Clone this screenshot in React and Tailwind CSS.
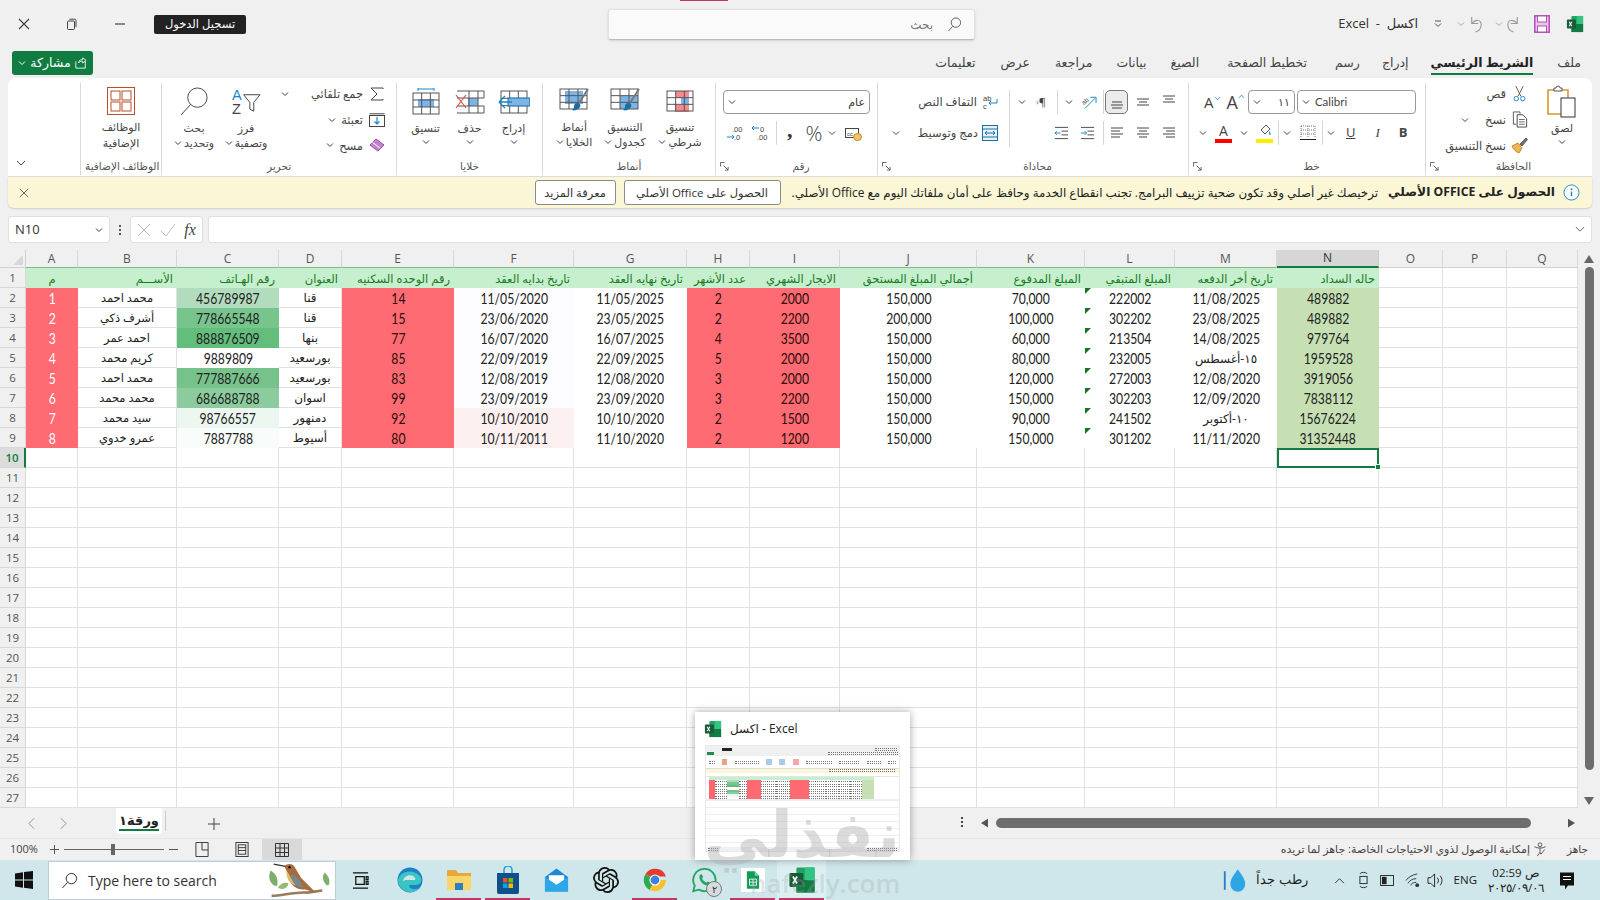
import React from 'react';
import { SiOpenai } from 'react-icons/si';

const Chev = ({ c = '#444', cls = '' }) => (
  <svg viewBox="0 0 8 8" className={`w-[8px] h-[8px] shrink-0 ${cls}`}><path d="M1 2.5 4 5.5 7 2.5" fill="none" stroke={c} strokeWidth="1" /></svg>
);

const GridLines = ({ x, y, w, h, cx = 3, cy = 3, s = '#555' }) => {
  const out = [];
  for (let i = 1; i < cx; i++) out.push(<line key={'v' + i} x1={x + (w * i) / cx} y1={y} x2={x + (w * i) / cx} y2={y + h} stroke={s} />);
  for (let i = 1; i < cy; i++) out.push(<line key={'h' + i} x1={x} y1={y + (h * i) / cy} x2={x + w} y2={y + (h * i) / cy} stroke={s} />);
  return <g>{out}<rect x={x} y={y} width={w} height={h} fill="none" stroke={s} /></g>;
};

const Launcher = () => (
  <svg viewBox="0 0 10 10" className="w-[9px] h-[9px] shrink-0"><path d="M.5 5V.5H5M4 4l5 5M9 5.5V9H5.5" fill="none" stroke="#555" /></svg>
);

const Sep = ({ h = 'h-[24px]' }) => <div className={`w-px ${h} bg-[#d5d5d5] shrink-0`} />;

const Group = ({ w, label, launcher, children, last }) => (
  <div className={`${w} h-full flex flex-col shrink-0 ${last ? '' : 'border-r border-[#d9d9d9]'}`}>
    <div className="flex-1 min-h-0 flex">{children}</div>
    <div className="h-[17px] flex items-center px-1 text-[10.5px] leading-none text-[#555]">
      {launcher ? <Launcher /> : null}
      <span dir="rtl" className="flex-1 text-center whitespace-nowrap">{label}</span>
    </div>
  </div>
);

const Big = ({ w = 'w-[44px]', icon, l1, l2, chevInline, chevBelow }) => (
  <div className={`${w} flex flex-col items-center shrink-0`}>
    <div className="h-[31px] flex items-center justify-center">{icon}</div>
    <div dir="rtl" className="mt-[3px] text-[11px] leading-[15px] text-[#444] whitespace-nowrap">{l1}</div>
    {l2 ? (
      <div className="flex items-center gap-[2px] text-[11px] leading-[15px] text-[#444] whitespace-nowrap">
        {chevInline ? <Chev /> : null}<span dir="rtl">{l2}</span>
      </div>
    ) : null}
    {chevBelow ? <Chev cls="mt-[3px]" /> : null}
  </div>
);

const Small = ({ icon, label, chev }) => (
  <div className="h-[26.5px] flex items-center justify-end gap-[5px] text-[11.5px] text-[#444]">
    {chev ? <Chev /> : null}
    <span dir="rtl" className="whitespace-nowrap">{label}</span>
    <span className="w-[17px] flex justify-center shrink-0">{icon}</span>
  </div>
);

/* ---------- ribbon icons ---------- */
const IcPaste = () => (
  <svg viewBox="0 0 32 34" className="w-[32px] h-[34px]">
    <path d="M2 5h20v24H2z" fill="#fff" stroke="#d39a2e" strokeWidth="1.6" />
    <path d="M8 6V3h2a2 2 0 0 1 4 0h2v3z" fill="#fff" stroke="#555" />
    <rect x="15" y="13" width="14" height="19" fill="#fff" stroke="#333" />
  </svg>
);
const IcCut = () => (
  <svg viewBox="0 0 14 18" className="w-[13px] h-[17px]">
    <path d="M3 1l5.5 11M11 1L5.5 12" stroke="#555" fill="none" />
    <circle cx="3.5" cy="14.5" r="2.4" fill="none" stroke="#1a86c8" /><circle cx="10.5" cy="14.5" r="2.4" fill="none" stroke="#1a86c8" />
  </svg>
);
const IcCopy = () => (
  <svg viewBox="0 0 16 18" className="w-[16px] h-[17px]">
    <path d="M4 14H1V1h7v2" fill="none" stroke="#555" /><path d="M5 4h6l4 4v9H5z" fill="#fff" stroke="#444" /><path d="M7 9h6M7 11.5h6M7 14h6" stroke="#666" />
  </svg>
);
const IcBrush = () => (
  <svg viewBox="0 0 17 16" className="w-[17px] h-[16px]">
    <path d="M1 9l6-3 4 5-3 5C5 15 2 12 1 9z" fill="#f0b45a" stroke="#c98a25" />
    <path d="M9 7l6-6 1.5 1.5L11 9z" fill="#777" stroke="#555" />
  </svg>
);
const IcSum = () => <svg viewBox="0 0 14 14" className="w-[14px] h-[14px]"><path d="M13 2V1H1l6 6-6 6h12v-1" fill="none" stroke="#444" /></svg>;
const IcFill = () => (
  <svg viewBox="0 0 16 14" className="w-[16px] h-[14px]"><rect x=".5" y="2.5" width="15" height="11" fill="#fff" stroke="#444" /><path d="M.5.8h15" stroke="#444" /><path d="M8 4v7M5.5 8.5 8 11l2.5-2.5" fill="none" stroke="#1a86c8" strokeWidth="1.2" /></svg>
);
const IcClear = () => (
  <svg viewBox="0 0 16 14" className="w-[16px] h-[14px]"><path d="M1 7l6-6 8 6-6 6z" fill="#c583d0" stroke="#9c4aa8" /><path d="M3.5 4.5 11 10" stroke="#fff" /></svg>
);
const IcSort = () => (
  <svg viewBox="0 0 30 32" className="w-[29px] h-[31px]">
    <text x="0" y="14" fontSize="15" fill="#1a86c8" fontFamily="Liberation Sans">A</text>
    <text x="0" y="29" fontSize="15" fill="#444" fontFamily="Liberation Sans">Z</text>
    <path d="M12 9h17l-6.5 8v9l-4-2v-7z" fill="#fff" stroke="#444" />
  </svg>
);
const IcFind = () => (
  <svg viewBox="0 0 30 30" className="w-[29px] h-[29px]"><circle cx="18" cy="11" r="10" fill="none" stroke="#444" /><path d="M11 18 1 29" stroke="#444" /></svg>
);
const IcAddins = () => (
  <svg viewBox="0 0 28 28" className="w-[28px] h-[28px]">
    <rect x=".5" y=".5" width="27" height="27" fill="#fff" stroke="#b8502a" />
    <rect x="4" y="4" width="9" height="9" fill="none" stroke="#b8502a" /><rect x="15" y="4" width="9" height="9" fill="none" stroke="#b8502a" />
    <rect x="4" y="15" width="9" height="9" fill="none" stroke="#b8502a" /><rect x="15" y="15" width="9" height="9" fill="none" stroke="#b8502a" />
  </svg>
);
const IcFormat = () => (
  <svg viewBox="0 0 30 28" className="w-[30px] h-[28px]">
    <path d="M7 1h16M7 0v3M23 0v3" stroke="#1a86c8" />
    <rect x="7" y="11" width="16" height="8" fill="#7db4e8" /><GridLines x={2} y={5} w={26} h={21} />
  </svg>
);
const IcDelete = () => (
  <svg viewBox="0 0 30 24" className="w-[30px] h-[24px]">
    <rect x="13" y="8" width="10" height="8" fill="#7db4e8" />
    <path d="M2 1h27M2 23h27M29 1v7M29 16v7M23 1v22M14 1v22M2 8h27M2 16h27" stroke="#555" fill="none" />
    <path d="M1 5l10 13M11 5 1 18" stroke="#e2504a" strokeWidth="1.2" />
  </svg>
);
const IcInsert = () => (
  <svg viewBox="0 0 32 24" className="w-[32px] h-[24px]">
    <GridLines x={3} y={1} w={26} h={22} />
    <rect x="10" y="8" width="22" height="8" fill="#7db4e8" stroke="#1a6ea8" />
    <path d="M1 12 7 6M1 12l6 6M1 12h13" stroke="#1a86c8" fill="none" strokeWidth="1.4" />
  </svg>
);
const Brush = () => (
  <g><path d="M29 1 20 15" stroke="#777" strokeWidth="2" /><path d="M18 15c3 0 4 2 3 4-2 3-6 4-8 3 2-1 2-3 2-4s1-3 3-3z" fill="#1a6ea8" /></g>
);
const IcCellStyle = () => (
  <svg viewBox="0 0 31 26" className="w-[31px] h-[26px]"><rect x="6" y="3" width="18" height="13" fill="#7db4e8" /><GridLines x={1} y={1} w={27} h={20} /><Brush /></svg>
);
const IcTable = () => (
  <svg viewBox="0 0 31 26" className="w-[31px] h-[26px]"><rect x="10" y="8" width="18" height="13" fill="#7db4e8" /><GridLines x={1} y={1} w={27} h={20} /><Brush /></svg>
);
const IcCond = () => (
  <svg viewBox="0 0 28 22" className="w-[28px] h-[22px]">
    <rect x="10" y="1" width="13" height="7" fill="#f88a8f" /><rect x="15" y="8" width="8" height="7" fill="#7db4e8" /><rect x="9" y="15" width="14" height="7" fill="#f88a8f" />
    <GridLines x={1} y={1} w={26} h={20} />
  </svg>
);
const IcWrap = () => (
  <svg viewBox="0 0 16 16" className="w-[16px] h-[16px]"><text x="1" y="7" fontSize="7.5" fill="#444" fontFamily="Liberation Sans">ab</text><text x="1" y="14.5" fontSize="7.5" fill="#444" fontFamily="Liberation Sans">c</text><path d="M15 5v4H7M9 7 7 9l2 2" fill="none" stroke="#1a86c8" /></svg>
);
const IcMerge = () => (
  <svg viewBox="0 0 16 16" className="w-[16px] h-[16px]"><rect x=".5" y=".5" width="15" height="15" fill="#e8f2fb" stroke="#1a6ea8" /><path d="M.5 4h15M.5 12h15" stroke="#1a6ea8" /><path d="M3 8h10M5 6 3 8l2 2M11 6l2 2-2 2" fill="none" stroke="#1a6ea8" /></svg>
);
const Lines = ({ rows }) => (
  <svg viewBox="0 0 14 14" className="w-[14px] h-[14px]">
    {rows.map((r, i) => <line key={i} x1={r[0]} x2={r[1]} y1={r[2]} y2={r[2]} stroke="#444" />)}
  </svg>
);
const IcOrient = () => (
  <svg viewBox="0 0 18 16" className="w-[17px] h-[16px] overflow-visible"><text x="2" y="10" fontSize="7" fill="#555" fontFamily="Liberation Sans" transform="rotate(-40 5 8)">ab</text><path d="M5 15 16 4M11 3h6v6" fill="none" stroke="#1a86c8" /></svg>
);
const IcIndent = ({ rev }) => (
  <svg viewBox="0 0 16 14" className="w-[15px] h-[14px]">
    <path d="M1 1h14M8 5h7M8 9h7M1 13h14" stroke="#444" />
    <path d={rev ? 'M1 7h6M5 5l2 2-2 2' : 'M7 7H1M3 5 1 7l2 2'} fill="none" stroke="#1a86c8" />
  </svg>
);
const IcCur = () => (
  <svg viewBox="0 0 17 15" className="w-[17px] h-[15px]"><rect x=".5" y="2.5" width="13" height="9" fill="#fff" stroke="#444" /><text x="2" y="9.5" fontSize="6" fill="#444" fontFamily="Liberation Sans">cc</text><ellipse cx="12.5" cy="11" rx="4" ry="3.5" fill="#f6c26b" stroke="#c98a25" /></svg>
);
const IcDec = ({ rev }) => (
  <svg viewBox="0 0 18 18" className="w-[18px] h-[18px]">
    <text x={rev ? 9 : 6} y="7.5" fontSize="7.5" fill="#444" fontFamily="Liberation Sans">{rev ? '0' : '.00'}</text>
    <text x={rev ? 6 : 8} y="16" fontSize="7.5" fill="#444" fontFamily="Liberation Sans">{rev ? '.00' : '.0'}</text>
    {rev ? <path d="M8 4H1M3 2 1 4l2 2" fill="none" stroke="#1a86c8" /> : <path d="M1 13h7M6 11l2 2-2 2" fill="none" stroke="#1a86c8" />}
  </svg>
);
const IcBorders = () => (
  <svg viewBox="0 0 16 16" className="w-[16px] h-[16px]"><path d="M1 1h14M1 5h14M1 9h14M1 1v12M8 1v12M15 1v12" stroke="#777" strokeDasharray="1 1" fill="none" /><path d="M0 14.5h16" stroke="#222" /></svg>
);

/* ---------- sheet data ---------- */
const COLS = ['A', 'B', 'C', 'D', 'E', 'F', 'G', 'H', 'I', 'J', 'K', 'L', 'M', 'N', 'O', 'P', 'Q'];
const HEAD = ['م', 'الأســـم', 'رقم الهـاتف', 'العنوان', 'رقم الوحده السكنيه', 'تاريخ بدايه العقد', 'تاريخ نهايه العقد', 'عدد الأشهر', 'الايجار الشهري', 'أجمالي المبلغ المستحق', 'المبلغ المدفوع', 'المبلغ المتبقي', 'تاريخ أخر الدفعه', 'حاله السداد'];
const ROWS = [
  ['1', 'محمد احمد', '456789987', 'قنا', '14', '11/05/2020', '11/05/2025', '2', '2000', '150,000', '70,000', '222002', '11/08/2025', '489882'],
  ['2', 'أشرف ذكي', '778665548', 'قنا', '15', '23/06/2020', '23/05/2025', '2', '2200', '200,000', '100,000', '302202', '23/08/2025', '489882'],
  ['3', 'احمد عمر', '888876509', 'بنها', '77', '16/07/2020', '16/07/2025', '4', '3500', '150,000', '60,000', '213504', '14/08/2025', '979764'],
  ['4', 'كريم محمد', '9889809', 'بورسعيد', '85', '22/09/2019', '22/09/2025', '5', '2000', '150,000', '80,000', '232005', '١٥-أغسطس', '1959528'],
  ['5', 'محمد احمد', '777887666', 'بورسعيد', '83', '12/08/2019', '12/08/2020', '3', '2000', '150,000', '120,000', '272003', '12/08/2020', '3919056'],
  ['6', 'محمد محمد', '686688788', 'اسوان', '99', '23/09/2019', '23/09/2020', '3', '2200', '150,000', '150,000', '302203', '12/09/2020', '7838112'],
  ['7', 'سيد محمد', '98766557', 'دمنهور', '92', '10/10/2010', '10/10/2020', '2', '1500', '150,000', '90,000', '241502', '١٠-أكتوبر', '15676224'],
  ['8', 'عمرو خدوي', '7887788', 'أسيوط', '80', '10/11/2011', '11/10/2020', '2', '1200', '150,000', '150,000', '301202', '11/11/2020', '31352448'],
];
const HEAT = ['bg-[#b2dcbe]', 'bg-[#78c48d]', 'bg-[#63be7b]', 'bg-white', 'bg-[#77c28b]', 'bg-[#8bcb9d]', 'bg-[#ecf7f0]', 'bg-[#f8fcfa]'];
const GRID = 'border-r border-b border-[#e1e1e1]';
const RED_C = 'bg-[#ff6b72] text-[#2a0c0c]';

function cellClass(c, r) {
  if (c === 0) return 'bg-[#ff6b72] text-white';
  if (c === 2) return `${HEAT[r]} text-[#222]`;
  if (c === 1 || c === 3) return `bg-white text-[#222] ${GRID}`;
  if (c === 4 || c === 7 || c === 8) return RED_C;
  if (c === 5) return r >= 6 ? 'bg-[#fdf0f0] text-[#222]' : 'bg-[#fdfcfe] text-[#222]';
  if (c === 13) return 'bg-[#c6e0b4] text-[#222]';
  return 'bg-white text-[#222]';
}

const Sheet = () => {
  const cells = [];
  cells.push(
    <div key="corner" className="bg-[#f0f0f0] border-b border-r border-[#d0d0d0] flex items-end justify-end p-[2px]">
      <div className="w-0 h-0 border-l-[10px] border-l-transparent border-b-[10px] border-b-[#d8d8d8]" />
    </div>
  );
  COLS.forEach((c, ci) => {
    const cls = c === 'N'
      ? 'bg-[#d6d6d6] border-b-2 border-b-[#107c41] border-r-[#c8c8c8] text-[#333]'
      : ci < 14
        ? 'bg-[#f0f0f0] border-b border-b-[#7fb892] border-r-[#d8d8d8] text-[#555]'
        : 'bg-[#f0f0f0] border-b border-b-[#d0d0d0] border-r-[#d8d8d8] text-[#555]';
    cells.push(<div key={c} className={`flex items-center justify-center text-[12px] border-r ${cls}`}>{c}</div>);
  });
  for (let r = 1; r <= 27; r++) {
    const active = r === 10;
    cells.push(
      <div key={'rh' + r} className={`flex items-center justify-center text-[11.5px] border-b border-[#d8d8d8] ${active ? 'bg-[#dcdcdc] text-[#107c41] border-r-2 border-r-[#107c41] font-semibold' : 'bg-[#f0f0f0] text-[#555] border-r'}`}>{r}</div>
    );
    COLS.forEach((c, ci) => {
      const key = c + r;
      if (r === 1 && ci < 14) {
        cells.push(
          <div key={key} dir="rtl" className={`bg-[#c6efce] text-[#1a7a24] text-[11.5px] pt-px flex items-center overflow-visible whitespace-nowrap px-[4px] ${ci === 0 ? 'justify-center' : 'justify-start'}`}>{HEAD[ci]}</div>
        );
      } else if (r >= 2 && r <= 9 && ci < 14) {
        const val = ROWS[r - 2][ci];
        const isAr = ci === 1 || ci === 3 || (ci === 12 && /[^\d/]/.test(val));
        cells.push(
          <div key={key} dir={isAr ? 'rtl' : undefined} className={`relative flex items-center justify-center whitespace-nowrap pt-px ${cellClass(ci, r - 2)}`}>
            {ci === 11 ? <span className="absolute left-0 top-0 w-0 h-0 border-t-[6px] border-t-[#14761f] border-r-[6px] border-r-transparent" /> : null}
            {isAr
              ? <span className={ci === 1 ? 'text-[11.5px]' : 'text-[12px]'}>{val}</span>
              : <span className="inline-block scale-x-[0.84] text-[14.5px] font-['Lato',sans-serif]">{val}</span>}
          </div>
        );
      } else if (active && c === 'N') {
        cells.push(
          <div key={key} className="relative bg-white border-2 border-[#107c41]">
            <span className="absolute right-[-4px] bottom-[-4px] w-[6px] h-[6px] bg-[#107c41] border border-white" />
          </div>
        );
      } else {
        cells.push(<div key={key} className={`bg-white ${GRID}`} />);
      }
    });
  }
  return (
    <div className="grid grid-cols-[26px_52px_99px_102px_63px_112px_120px_113px_63px_90px_137px_108px_90px_102px_102px_64px_64px_71px] grid-rows-[18px] auto-rows-[20px] w-[1578px] h-[558px] overflow-hidden shrink-0">
      {cells}
    </div>
  );
};

const VScroll = () => (
  <div className="w-[22px] h-[558px] flex flex-col items-center shrink-0 bg-[#f0f0f0]">
    <svg viewBox="0 0 10 8" className="w-[10px] h-[8px] mt-[5px]"><path d="M5 0l5 8H0z" fill="#666" /></svg>
    <div className="w-[9px] h-[503px] mt-[4px] rounded-full bg-[#6e6e6e]" />
    <div className="flex-1" />
    <svg viewBox="0 0 10 8" className="w-[10px] h-[8px] mb-[3px]"><path d="M5 8 10 0H0z" fill="#666" /></svg>
  </div>
);

/* ---------- taskbar icons ---------- */
const ExcelIc = ({ s = 'w-[18px] h-[18px]' }) => (
  <svg viewBox="0 0 20 20" className={s}>
    <rect x="6" y="1" width="13" height="18" rx="1" fill="#21a366" /><rect x="12" y="1" width="7" height="9" fill="#33c481" /><rect x="6" y="10" width="13" height="9" fill="#107c41" />
    <rect x="1" y="5" width="10" height="10" rx="1" fill="#185c37" /><path d="M3.5 7.5l3 5M6.5 7.5l-3 5" stroke="#fff" strokeWidth="1.2" />
  </svg>
);
const Bird = () => (
  <svg viewBox="6 3 58 36" className="w-[66px] h-[38px]">
    <path d="M10 36c10 0 22-4 34-3l14-2" stroke="#9a7b5c" strokeWidth="2.5" fill="none" />
    <path d="M12 26c-5-4-5-9-3-14 5 3 8 8 6 15z" fill="#7cb06a" /><path d="M16 28c3-4 6-5 10-4-1 5-5 7-10 4z" fill="#90bd77" />
    <path d="M62 26c-4-4-4-8-2-12 4 3 6 8 4 12z" fill="#7cb06a" />
    <path d="M22 8c3-3 8-3 10 1l6 10 14 14-10-3c-9 1-16-6-16-14z" fill="#a86b3c" />
    <path d="M28 16c5 0 9 5 12 12-6 0-11-4-12-12z" fill="#6f8a92" />
    <path d="M24 12c4 5 5 10 9 14-6-1-9-6-9-14z" fill="#e6b76a" />
    <circle cx="27" cy="9" r="1.2" fill="#111" /><path d="M23 8 12 6" stroke="#333" strokeWidth="1.2" />
  </svg>
);
const Win = () => (
  <svg viewBox="0 0 18 18" className="w-[18px] h-[18px]"><path d="M0 2.5 8 1.2V8.5H0zM9 1l9-1v8.5H9zM0 9.5h8v7.3L0 15.5zM9 9.5h9V18l-9-1.2z" fill="#111" /></svg>
);
const Edge = () => (
  <svg viewBox="0 0 26 26" className="w-[26px] h-[26px]">
    <circle cx="13" cy="13" r="12.5" fill="#1c7fc8" /><path d="M1 13C3 3 17 2 23 9c3 4 1 9-4 9H12c0 4 6 6 12 2-3 4-8 6-13 5C4 23 1 18 1 13z" fill="#3ac4c4" />
    <path d="M6 15c0-5 5-8 10-6 2 1 3 3 2 4H9c-2 0-3 1-3 2z" fill="#cfe7ea" />
  </svg>
);
const Folder = () => (
  <svg viewBox="0 0 26 24" className="w-[26px] h-[24px]"><path d="M1 2h9l2 3h13v4H1z" fill="#e8a93a" /><path d="M1 8h24v13a1 1 0 0 1-1 1H2a1 1 0 0 1-1-1z" fill="#f9d56a" /><rect x="9" y="15" width="8" height="7" fill="#2d7fc1" /></svg>
);
const Store = () => (
  <svg viewBox="0 0 24 28" className="w-[24px] h-[28px]"><path d="M8 7V4a4 4 0 0 1 8 0v3" fill="none" stroke="#2aa3d8" strokeWidth="1.6" /><path d="M1 7h22v19a2 2 0 0 1-2 2H3a2 2 0 0 1-2-2z" fill="#0f4f8a" /><rect x="7" y="12" width="4.5" height="4.5" fill="#f25022" /><rect x="12.5" y="12" width="4.5" height="4.5" fill="#7fba00" /><rect x="7" y="17.5" width="4.5" height="4.5" fill="#00a4ef" /><rect x="12.5" y="17.5" width="4.5" height="4.5" fill="#ffb900" /></svg>
);
const Mail = () => (
  <svg viewBox="0 0 26 24" className="w-[25px] h-[24px]"><path d="M1 9 13 0l12 9v15H1z" fill="#1e88d8" /><path d="M5 7h16v7l-8 5-8-5z" fill="#fff" /><path d="M1 9l12 8 12-8v15H1z" fill="#2ea7ea" /></svg>
);
const Chrome = () => (
  <svg viewBox="0 0 26 26" className="w-[26px] h-[26px]">
    <path d="M13 13 3.5 7A11.5 11.5 0 0 1 24 9.5H13z" fill="#e33b2e" /><path d="M13 13 7.5 23A11.5 11.5 0 0 1 3.5 7z" fill="#2da94f" /><path d="M13 13h11a11.5 11.5 0 0 1-16.5 10z" fill="#fbc02d" />
    <circle cx="13" cy="13" r="5.6" fill="#fff" /><circle cx="13" cy="13" r="4.4" fill="#3b82e0" />
  </svg>
);
const Whats = () => (
  <svg viewBox="0 0 28 28" className="w-[26px] h-[26px]">
    <path d="M14 2a12 12 0 0 0-10 18L2.5 26l6-1.6A12 12 0 1 0 14 2z" fill="none" stroke="#25a560" strokeWidth="2" />
    <path d="M9.5 8.5c1-1 2-1 2.5 0l1 2c.2.6-1 1.6-1 2 .8 2 2.5 3.5 4.5 4.3.5 0 1.2-1.3 1.8-1.1l2 1c1 .5.7 2-.3 2.7-5 3-13-5-10.5-11z" fill="#25a560" />
  </svg>
);
const Sheets = () => (
  <div className="w-[24px] h-[24px] bg-white flex items-center justify-center">
    <svg viewBox="0 0 16 22" className="w-[14px] h-[20px]"><path d="M1 1h9l5 5v15H1z" fill="#0f9d58" /><path d="M10 1l5 5h-5z" fill="#87ceac" /><path d="M4 10h8v7H4zM4 13.5h8M8 10v7" fill="none" stroke="#fff" /></svg>
  </div>
);

const TaskIcon = ({ children, bar, active, w = 'w-[49px]' }) => (
  <div className={`${w} h-full flex items-center justify-center relative shrink-0 ${active ? 'bg-[#dcf0f2]' : ''}`}>
    {children}
    {bar ? <span className="absolute bottom-0 left-[2px] right-[2px] h-[2px] bg-[#c2376a]" /> : null}
  </div>
);

const Dash = ({ w }) => <i className={`block ${w} h-[3px] border-y border-dotted border-[#777]`} />;

const Mini = () => {
  const cols = 'grid grid-cols-[3px_6px_12px_12px_8px_14px_15px_14px_8px_11px_17px_13px_11px_12px_12px_8px_8px_9px]';
  const heat = ['bg-[#b2dcbe]', 'bg-[#78c48d]', 'bg-[#63be7b]', 'bg-white', 'bg-[#77c28b]', 'bg-[#8bcb9d]', 'bg-[#ecf7f0]', 'bg-white'];
  const dot = 'border-b border-dotted border-[#777]';
  const rows = [];
  for (let r = 0; r < 8; r++) {
    rows.push(
      <div key={r} className={`${cols} h-[2.4px]`}>
        <i /><i className="bg-[#ff666d]" /><i className={dot} /><i className={heat[r]} /><i className={dot} />
        <i className="bg-[#ff6a71]" /><i className={dot} /><i className={dot} /><i className="bg-[#ff6a71]" /><i className="bg-[#ff6a71]" />
        <i className={dot} /><i className={dot} /><i className={dot} /><i className={dot} /><i className="bg-[#c6e0b4]" />
      </div>
    );
  }
  return (
    <div className="w-[195px] h-[107px] bg-white border border-[#e8e8e8] flex flex-col">
      <div className="h-[6px] bg-[#f0f0f0] flex items-center px-[2px] gap-[6px]"><i className="block w-[10px] h-[3px] bg-[#222] ml-[14px]" /><i className="block flex-1 h-px" /><Dash w="w-[22px]" /></div>
      <div className="h-[4px] bg-[#f0f0f0] flex justify-between px-[1px]"><i className="block w-[7px] h-[3px] bg-[#1f8a4c]" /><Dash w="w-[70px]" /></div>
      <div className="h-[13px] bg-white border-b border-[#ddd] flex justify-between items-center px-[3px]">
        <Dash w="w-[6px]" /><i className="block w-[5px] h-[6px] bg-[#e9a184]" /><Dash w="w-[24px]" /><i className="block w-[6px] h-[6px] bg-[#a8cbe8]" /><i className="block w-[6px] h-[6px] bg-[#a8cbe8]" /><i className="block w-[6px] h-[6px] bg-[#f6a5a8]" /><Dash w="w-[26px]" /><Dash w="w-[20px]" /><Dash w="w-[14px]" /><Dash w="w-[8px]" />
      </div>
      <div className="h-[4px] bg-[#fbf7d8] flex justify-end pr-[4px]"><Dash w="w-[66px]" /></div>
      <div className="h-[4px] border-b border-[#e5e5e5]" />
      <div className={`${cols} h-[3px]`}><i /><i className="col-span-14 bg-[#c6efce]" /></div>
      <div className="flex flex-col">{rows}</div>
      <div className="flex-1 border-t border-[#eee] bg-[linear-gradient(#eee_1px,transparent_1px)] bg-[length:100%_7px]" />
      <div className="h-[4px] bg-[#f0f0f0] flex justify-between items-center px-[2px]"><Dash w="w-[10px]" /><Dash w="w-[30px]" /></div>
    </div>
  );
};

const TABS = [
  ['ملف', 'ml-[24px]'], ['الشريط الرئيسي', 'ml-[22px]'], ['إدراج', 'ml-[22px]'], ['رسم', 'ml-[28px]'], ['تخطيط الصفحة', 'ml-[28px]'],
  ['الصيغ', 'ml-[24px]'], ['بيانات', 'ml-[24px]'], ['مراجعة', 'ml-[25px]'], ['عرض', 'ml-[25px]'], ['تعليمات', 'ml-0'],
];

export default function App() {
  return (
    <div className="w-[1600px] h-[900px] relative overflow-hidden bg-[#f0f0f0] flex flex-col font-['Open_Sans','DejaVu_Sans',sans-serif] text-[#333]">
      {/* title bar */}
      <div className="h-[50px] flex items-start shrink-0 relative">
        <div className="w-[608px] h-[48px] flex items-center pl-[18px] shrink-0">
          <svg viewBox="0 0 12 12" className="w-[12px] h-[12px] shrink-0"><path d="M1 1l10 10M11 1 1 11" stroke="#444" strokeWidth="1.2" /></svg>
          <svg viewBox="0 0 12 12" className="w-[12px] h-[12px] ml-[36px] shrink-0"><rect x="1.5" y="3" width="7" height="8.5" rx="1" fill="none" stroke="#444" /><path d="M3.5 1.2H8.5a1.5 1.5 0 0 1 1.5 1.5V9" fill="none" stroke="#444" /></svg>
          <svg viewBox="0 0 12 12" className="w-[12px] h-[12px] ml-[36px] shrink-0"><path d="M1 6h10" stroke="#444" strokeWidth="1.2" /></svg>
          <div dir="rtl" className="ml-[28px] w-[92px] h-[19px] bg-[#222] rounded-[2px] text-white text-[11.5px] flex items-center justify-center whitespace-nowrap">تسجيل الدخول</div>
        </div>
        <div className="w-[367px] h-[31px] mt-[9px] bg-[#fafafa] rounded-[3px] border border-[#e2e2e2] border-b-[#bbb] shadow-sm flex items-center justify-end gap-[14px] pr-[12px] shrink-0">
          <span dir="rtl" className="text-[12px] text-[#777]">بحث</span>
          <svg viewBox="0 0 16 16" className="w-[15px] h-[15px]"><circle cx="9.5" cy="6" r="5" fill="none" stroke="#555" /><path d="M6 10 1.5 15" stroke="#555" /></svg>
        </div>
        <div className="flex-1 h-[48px] flex items-center justify-end pr-[16px]">
          <span dir="rtl" className="text-[13px] text-[#333] whitespace-pre">{'اكسل  -  Excel'}</span>
          <svg viewBox="0 0 10 10" className="w-[10px] h-[10px] ml-[15px]"><path d="M2 2h6M2 4.5l3 3 3-3" fill="none" stroke="#555" /></svg>
          <Chev c="#aaa" cls="ml-[14px]" />
          <svg viewBox="0 0 14 18" className="w-[15px] h-[17px] ml-[3px]"><path d="M3 1v7h7M3 8c4-5 10-4 10 1 0 4-3 7-6 8" fill="none" stroke="#999" strokeWidth="1.2" /></svg>
          <Chev c="#aaa" cls="ml-[12px]" />
          <svg viewBox="0 0 14 18" className="w-[15px] h-[17px] ml-[3px]"><path d="M11 1v7H4M11 8C7 3 1 4 1 9c0 4 3 7 6 8" fill="none" stroke="#999" strokeWidth="1.2" /></svg>
          <svg viewBox="0 0 16 18" className="w-[16px] h-[18px] ml-[13px]"><rect x=".8" y=".8" width="14.4" height="16.4" fill="#e9c6ea" stroke="#b04fb5" strokeWidth="1.5" /><rect x="3.5" y="1" width="9" height="6" fill="#fff" stroke="#b04fb5" /><rect x="3.5" y="11" width="9" height="6" fill="#fff" stroke="#b04fb5" /></svg>
          <span className="ml-[16px]"><ExcelIc /></span>
        </div>
      </div>

      {/* tabs */}
      <div className="h-[28px] flex items-start justify-between shrink-0 pl-[12px]">
        <div className="w-[81px] h-[24px] mt-px bg-[#107c41] rounded-[3px] text-white flex items-center justify-center gap-[4px]">
          <Chev c="#fff" />
          <span dir="rtl" className="text-[12.5px]">مشاركة</span>
          <svg viewBox="0 0 14 14" className="w-[12px] h-[12px]"><path d="M1 5v8h11V5M4 7c0-3 3-4 5-4V1l4 3-4 3V5C7 5 5 5 4 7z" fill="none" stroke="#fff" /></svg>
        </div>
        <div dir="rtl" className="flex items-start pr-[19px] text-[12.5px] text-[#444]">
          {TABS.map(([t, m], i) => (
            <div key={t} className={`h-[25px] pt-[3px] flex items-center border-b-2 whitespace-nowrap ${m} ${i === 1 ? 'border-[#107c41] font-bold text-[#222]' : 'border-transparent'}`}>{t}</div>
          ))}
        </div>
      </div>

      {/* ribbon */}
      <div className="h-[99px] mx-[8px] bg-white rounded-t-[8px] flex pt-[5px] pb-px shrink-0 border-b border-[#dcdcdc]">
        <div className="w-[73px] h-full shrink-0 border-r border-[#d9d9d9] flex items-end pl-[8px] pb-[9px]">
          <svg viewBox="0 0 10 6" className="w-[10px] h-[6px]"><path d="M1 1l4 4 4-4" fill="none" stroke="#444" /></svg>
        </div>
        <Group w="w-[81px]" label="الوظائف الإضافية">
          <div className="flex-1 flex justify-center pt-[4px]"><div className="flex flex-col items-center">
            <IcAddins />
            <div dir="rtl" className="text-[11px] leading-[16px] mt-[4px] text-[#444] text-center whitespace-nowrap">الوظائف<br />الإضافية</div>
          </div></div>
        </Group>
        <Group w="w-[235px]" label="تحرير">
          <div className="flex flex-1 pl-[6px] pr-[11px]">
            <div className="flex pt-[3px]">
              <Big w="w-[52px]" icon={<IcFind />} l1="بحث" l2="وتحديد" chevInline />
              <Big w="w-[52px]" icon={<IcSort />} l1="فرز" l2="وتصفية" chevInline />
            </div>
            <div className="flex-1 flex flex-col -mt-[2px]">
              <div className="h-[26.5px] flex items-center justify-between text-[11.5px] text-[#444]">
                <Chev cls="ml-[9px]" />
                <span className="flex items-center gap-[5px]"><span dir="rtl" className="whitespace-nowrap">جمع تلقائي</span><span className="w-[17px] flex justify-center"><IcSum /></span></span>
              </div>
              <Small icon={<IcFill />} label="تعبئة" chev />
              <Small icon={<IcClear />} label="مسح" chev />
            </div>
          </div>
        </Group>
        <Group w="w-[146px]" label="خلايا">
          <div className="flex flex-1 justify-center pt-[3px]">
            <Big icon={<IcFormat />} l1="تنسيق" chevBelow />
            <Big icon={<IcDelete />} l1="حذف" chevBelow />
            <Big icon={<IcInsert />} l1="إدراج" chevBelow />
          </div>
        </Group>
        <Group w="w-[173px]" label="أنماط">
          <div className="flex flex-1 pl-[4px] pt-[2px]">
            <Big w="w-[54px]" icon={<IcCellStyle />} l1="أنماط" l2="الخلايا" chevInline />
            <Big w="w-[48px]" icon={<IcTable />} l1="التنسيق" l2="كجدول" chevInline />
            <Big w="w-[62px]" icon={<IcCond />} l1="تنسيق" l2="شرطي" chevInline />
          </div>
        </Group>
        <Group w="w-[162px]" label="رقم" launcher>
          <div className="flex-1 flex flex-col px-[7px] pt-[7px]">
            <div className="h-[24px] rounded-[4px] border border-[#999] flex items-center justify-between px-[4px] text-[11px] w-[147px]"><Chev /><span dir="rtl">عام</span></div>
            <div className="flex items-center mt-[7px] h-[24px]">
              <span className="ml-[3px]"><IcDec /></span>
              <span className="ml-[7px]"><IcDec rev /></span>
              <span className="ml-[7px]"><Sep /></span>
              <span className="font-['Liberation_Serif',serif] text-[22px] font-bold leading-none mt-[-6px] ml-[10px]">,</span>
              <span className="text-[21px] leading-none ml-[13px] text-[#444] font-light">%</span>
              <Chev cls="ml-[6px]" />
              <span className="ml-[9px]"><IcCur /></span>
            </div>
          </div>
        </Group>
        <Group w="w-[311px]" label="محاذاة" launcher>
          <div className="flex-1 flex pt-[7px] pl-[14px] pr-[6px]">
            <div className="w-[106px] flex flex-col gap-[7px] text-[11.5px] text-[#444]">
              <div className="h-[24px] flex items-center justify-end gap-[5px]"><span dir="rtl" className="whitespace-nowrap">التفاف النص</span><IcWrap /></div>
              <div className="h-[24px] flex items-center justify-between"><Chev /><span className="flex items-center gap-[4px]"><span dir="rtl" className="whitespace-nowrap">دمج وتوسيط</span><IcMerge /></span></div>
            </div>
            <div className="ml-[11px]"><Sep h="h-[57px]" /></div>
            <div className="flex-1 flex flex-col gap-[7px] pl-[8px]">
              <div className="h-[24px] flex items-center">
                <Chev />
                <span className="ml-[10px] w-[14px] text-[11px] flex items-center text-[#444]"><span className="text-[#1a86c8] text-[9px]">›</span>¶</span>
                <span className="ml-[7px]"><Sep /></span>
                <Chev cls="ml-[7px]" />
                <span className="ml-[7px]"><IcOrient /></span>
                <span className="ml-[6px]"><Sep /></span>
                <span className="ml-[1px] w-[23px] h-[24px] rounded-[5px] border border-[#777] bg-[#ebebeb] flex items-center justify-center shrink-0"><Lines rows={[[2, 12, 7], [1, 13, 10], [2, 12, 13]]} /></span>
                <span className="ml-[8px]"><Lines rows={[[1, 13, 4], [3, 11, 7], [1, 13, 10]]} /></span>
                <span className="ml-[12px]"><Lines rows={[[1, 13, 1], [3, 11, 4], [1, 13, 7]]} /></span>
              </div>
              <div className="h-[24px] flex items-center pl-[36px]">
                <IcIndent /><span className="ml-[11px]"><IcIndent rev /></span>
                <span className="ml-[8px]"><Sep /></span>
                <span className="ml-[6px]"><Lines rows={[[1, 13, 2], [1, 10, 5], [1, 13, 8], [1, 10, 11]]} /></span>
                <span className="ml-[12px]"><Lines rows={[[1, 13, 2], [3, 11, 5], [1, 13, 8], [3, 11, 11]]} /></span>
                <span className="ml-[12px]"><Lines rows={[[1, 13, 2], [4, 13, 5], [1, 13, 8], [4, 13, 11]]} /></span>
              </div>
            </div>
          </div>
        </Group>
        <Group w="w-[237px]" label="خط" launcher>
          <div className="flex-1 flex flex-col pt-[7px] pl-[9px] pr-[9px] gap-[7px]">
            <div className="h-[24px] flex items-center text-[#444]">
              <span className="ml-[6px] text-[15px] flex items-start leading-none">A<svg viewBox="0 0 8 8" className="w-[7px] h-[7px]"><path d="M1 2.5 4 5.5 7 2.5" fill="none" stroke="#1a86c8" /></svg></span>
              <span className="ml-[6px] text-[18px] flex items-start leading-none">A<svg viewBox="0 0 8 8" className="w-[7px] h-[7px]"><path d="M1 5.5 4 2.5 7 5.5" fill="none" stroke="#1a86c8" /></svg></span>
              <span className="ml-[3px] w-[47px] h-[24px] rounded-[4px] border border-[#999] flex items-center justify-between px-[4px] text-[11px]"><Chev /><span>١١</span></span>
              <span className="ml-[2px] flex-1 h-[24px] rounded-[4px] border border-[#999] flex items-center px-[4px] gap-[5px] text-[11.5px] font-['Lato',sans-serif]"><Chev />Calibri</span>
            </div>
            <div className="h-[24px] flex items-center text-[#444]">
              <Chev cls="ml-px" />
              <span className="ml-[8px] w-[17px] shrink-0 flex flex-col items-center"><span className="text-[14px] leading-[16px]">A</span><span className="w-[17px] h-[4px] bg-[#ff0000]" /></span>
              <Chev cls="ml-[8px]" />
              <span className="ml-[8px] w-[17px] shrink-0 flex flex-col items-center"><svg viewBox="0 0 14 14" className="w-[14px] h-[14px]"><path d="M3 7l5-5 4 4-5 5z" fill="#fff" stroke="#555" /><path d="M11 8c2 2 2 4 1 4s-1-2-1-4z" fill="#1a86c8" /></svg><span className="w-[17px] h-[4px] bg-[#ffee00] mt-[2px]" /></span>
              <span className="ml-[5px]"><Sep /></span>
              <Chev cls="ml-[4px]" />
              <span className="ml-[9px]"><IcBorders /></span>
              <span className="ml-[6px]"><Sep /></span>
              <Chev cls="ml-[4px]" />
              <span className="ml-[11px] text-[13px] underline">U</span>
              <span className="ml-[20px] text-[13px] italic font-['Liberation_Serif',serif]">I</span>
              <span className="ml-[19px] text-[13px] font-bold">B</span>
            </div>
          </div>
        </Group>
        <Group w="w-[166px]" label="الحافظة" launcher last>
          <div className="flex-1 flex">
            <div className="flex-1 flex flex-col pr-[12px] -mt-[2px]">
              <Small icon={<IcCut />} label="قص" />
              <div className="h-[26.5px] flex items-center justify-between text-[11.5px] text-[#444]"><Chev cls="ml-[35px]" /><span className="flex items-center gap-[5px]"><span dir="rtl">نسخ</span><span className="w-[17px] flex justify-center"><IcCopy /></span></span></div>
              <Small icon={<IcBrush />} label="نسخ التنسيق" />
            </div>
            <div className="w-[44px] mr-[8px] flex flex-col items-center pt-[2px]">
              <IcPaste />
              <span dir="rtl" className="text-[11px] leading-[14px] mt-[2px] text-[#444]">لصق</span>
              <Chev cls="mt-[3px]" />
            </div>
          </div>
        </Group>
      </div>

      {/* warning bar */}
      <div className="h-[31px] mx-[8px] bg-[#fbf7d6] rounded-b-[6px] shadow-[0_1px_2px_#ccc] flex items-center justify-between pl-[11px] pr-[12px] shrink-0">
        <svg viewBox="0 0 12 12" className="w-[10px] h-[10px]"><path d="M1 1l10 10M11 1 1 11" stroke="#444" /></svg>
        <div className="flex items-center">
          <div dir="rtl" className="w-[81px] h-[25px] bg-white border border-[#8a8a8a] rounded-[3px] flex items-center justify-center text-[11.5px] whitespace-nowrap">معرفة المزيد</div>
          <div dir="rtl" className="w-[157px] h-[25px] ml-[8px] bg-white border border-[#8a8a8a] rounded-[3px] flex items-center justify-center text-[11.5px] whitespace-nowrap">الحصول على Office الأصلي</div>
          <div dir="rtl" className="ml-[11px] text-[11.9px] text-[#222] whitespace-nowrap">ترخيصك غير أصلي وقد تكون ضحية تزييف البرامج. تجنب انقطاع الخدمة وحافظ على أمان ملفاتك اليوم مع Office الأصلي.</div>
          <div dir="rtl" className="ml-[10px] text-[12.2px] font-bold text-[#222] whitespace-nowrap">الحصول على OFFICE الأصلي</div>
          <svg viewBox="0 0 18 18" className="w-[17px] h-[17px] ml-[8px]"><circle cx="9" cy="9" r="8" fill="#fff" stroke="#1a86c8" /><path d="M9 8v5" stroke="#1a86c8" strokeWidth="1.5" /><circle cx="9" cy="5.5" r="1" fill="#1a86c8" /></svg>
        </div>
      </div>

      {/* formula bar */}
      <div className="h-[27px] mt-[8px] mx-[8px] flex items-stretch shrink-0">
        <div className="w-[102px] bg-white rounded-[3px] border border-[#e0e0e0] flex items-center justify-between px-[6px] text-[13px] text-[#333]">N10<Chev /></div>
        <div className="w-[20px] flex flex-col items-center justify-center gap-[2px]"><i className="block w-[2px] h-[2px] bg-[#555]" /><i className="block w-[2px] h-[2px] bg-[#555]" /><i className="block w-[2px] h-[2px] bg-[#555]" /></div>
        <div className="w-[73px] bg-white rounded-[3px] border border-[#e0e0e0] flex items-center justify-around px-[2px]">
          <svg viewBox="0 0 14 14" className="w-[14px] h-[14px]"><path d="M1 1l12 12M13 1 1 13" stroke="#bbb" /></svg>
          <svg viewBox="0 0 16 14" className="w-[16px] h-[14px]"><path d="M1 8l5 5L15 1" fill="none" stroke="#bbb" /></svg>
          <span className="font-['Liberation_Serif',serif] italic text-[16px] text-[#444]">fx</span>
        </div>
        <div className="flex-1 ml-[5px] bg-white rounded-[3px] border border-[#e0e0e0] flex items-center justify-end pr-[6px]"><svg viewBox="0 0 12 8" className="w-[10px] h-[7px]"><path d="M1 1l5 5 5-5" fill="none" stroke="#444" /></svg></div>
      </div>

      {/* sheet */}
      <div className="mt-[7px] flex h-[558px] shrink-0">
        <Sheet />
        <VScroll />
      </div>

      {/* sheet tabs */}
      <div className="h-[30px] flex items-start shrink-0">
        <svg viewBox="0 0 8 14" className="w-[7px] h-[13px] ml-[28px] mt-[9px]"><path d="M7 1 1 7l6 6" fill="none" stroke="#888" /></svg>
        <svg viewBox="0 0 8 14" className="w-[7px] h-[13px] ml-[25px] mt-[9px]"><path d="M1 1l6 6-6 6" fill="none" stroke="#888" /></svg>
        <div className="w-[46px] h-[26px] ml-[49px] bg-white rounded-b-[4px] flex flex-col items-center justify-center shrink-0">
          <span dir="rtl" className="text-[13px] font-bold text-[#222] leading-[17px] border-b-2 border-[#107c41]">ورقة١</span>
        </div>
        <div className="w-px h-[20px] ml-[3px] mt-[3px] bg-[#ccc]" />
        <svg viewBox="0 0 12 12" className="w-[12px] h-[12px] ml-[42px] mt-[10px]"><path d="M6 0v12M0 6h12" stroke="#444" /></svg>
        <div className="ml-[741px] w-[3px] mt-[9px] flex flex-col gap-[2px]"><i className="block w-[2px] h-[2px] bg-[#444]" /><i className="block w-[2px] h-[2px] bg-[#444]" /><i className="block w-[2px] h-[2px] bg-[#444]" /></div>
        <svg viewBox="0 0 8 10" className="w-[7px] h-[10px] ml-[17px] mt-[10px]"><path d="M0 5l8-5v10z" fill="#555" /></svg>
        <div className="w-[535px] h-[10px] ml-[8px] mt-[10px] rounded-full bg-[#6e6e6e]" />
        <svg viewBox="0 0 8 10" className="w-[7px] h-[10px] ml-[37px] mt-[10px]"><path d="M8 5 0 0v10z" fill="#555" /></svg>
      </div>

      {/* status bar */}
      <div className="h-[22px] flex items-center shrink-0 border-t border-[#e6e6e6] text-[11px] text-[#444]">
        <span className="ml-[10px] w-[30px] whitespace-nowrap">100%</span>
        <svg viewBox="0 0 10 10" className="w-[9px] h-[9px] ml-[10px]"><path d="M5 0v10M0 5h10" stroke="#444" /></svg>
        <div className="ml-[5px] w-[100px] h-px bg-[#666] flex justify-center items-center pr-[3px]"><i className="block w-[4px] h-[11px] bg-[#666]" /></div>
        <svg viewBox="0 0 10 10" className="w-[9px] h-[9px] ml-[5px]"><path d="M0 5h10" stroke="#444" /></svg>
        <svg viewBox="0 0 14 16" className="w-[14px] h-[15px] ml-[17px]"><path d="M.5.5h13v15H.5zM7 .5v8h6.5" fill="none" stroke="#333" /></svg>
        <svg viewBox="0 0 14 16" className="w-[14px] h-[15px] ml-[26px]"><rect x=".5" y=".5" width="13" height="15" fill="none" stroke="#333" /><rect x="3" y="3" width="8" height="10" fill="none" stroke="#333" /><path d="M3 6h8M3 9h8" stroke="#333" /></svg>
        <div className="w-[40px] h-[22px] ml-[13px] bg-[#d9d9d9] flex items-center justify-center"><svg viewBox="0 0 14 14" className="w-[14px] h-[14px]"><path d="M.5.5h13v13H.5zM5 .5v13M9.5.5v13M.5 5h13M.5 9.5h13" fill="none" stroke="#333" /></svg></div>
        <div className="flex-1" />
        <span dir="rtl" className="text-[11px] whitespace-nowrap">إمكانية الوصول لذوي الاحتياجات الخاصة: جاهز لما تريده</span>
        <svg viewBox="0 0 14 16" className="w-[14px] h-[15px] ml-[3px]"><circle cx="7" cy="3" r="2" fill="none" stroke="#555" /><path d="M1 5c3 2 9 2 12 0M7 6v5l-3 4M7 11l1 2 4-5" fill="none" stroke="#555" /></svg>
        <span dir="rtl" className="ml-[20px] mr-[12px] text-[10.5px]">جاهز</span>
      </div>

      {/* taskbar */}
      <div className="h-[40px] bg-[#cfe7ea] flex items-center shrink-0 font-['Open_Sans',sans-serif]">
        <div className="w-[48px] flex justify-center shrink-0"><Win /></div>
        <div className="w-[288px] h-[39px] bg-white border border-[#bcd0d3] flex items-center pl-[12px] shrink-0">
          <svg viewBox="0 0 18 18" className="w-[17px] h-[17px]"><circle cx="11" cy="7" r="5.5" fill="none" stroke="#222" /><path d="M7 11 1.5 17" stroke="#222" /></svg>
          <span className="ml-[10px] text-[14px] text-[#333] whitespace-nowrap">Type here to search</span>
          <div className="flex-1 flex justify-end pr-[4px]"><Bird /></div>
        </div>
        <TaskIcon w="w-[49px]"><svg viewBox="0 0 18 18" className="w-[17px] h-[17px]"><path d="M1 1h16M1 17h16M4 5h9v8H4zM15 5h2v3h-2zM15 10h2v3h-2z" fill="none" stroke="#111" strokeWidth="1.3" /></svg></TaskIcon>
        <TaskIcon><Edge /></TaskIcon>
        <TaskIcon bar><Folder /></TaskIcon>
        <TaskIcon bar><Store /></TaskIcon>
        <TaskIcon><Mail /></TaskIcon>
        <TaskIcon><SiOpenai className="w-[26px] h-[26px] text-[#111]" /></TaskIcon>
        <TaskIcon bar><Chrome /></TaskIcon>
        <TaskIcon>
          <Whats />
          <span className="absolute right-[6px] bottom-[3px] w-[16px] h-[16px] rounded-full bg-[#d5dcdd] border border-[#777] text-[10px] flex items-center justify-center leading-none">٢</span>
        </TaskIcon>
        <TaskIcon bar><Sheets /></TaskIcon>
        <TaskIcon bar active><ExcelIc s="w-[28px] h-[28px]" /></TaskIcon>
        <div className="flex-1" />
        <div className="flex items-center text-[#222] text-[12px]">
          <svg viewBox="0 0 28 26" className="w-[26px] h-[25px]"><path d="M2 3h2v20H2z" fill="#2a7ccf" /><path d="M17 1c4 6 8 10 8 16a8 8 0 0 1-16 0c0-6 4-10 8-16z" fill="#2fa5e6" /></svg>
          <span dir="rtl" className="ml-[8px] text-[13px] whitespace-nowrap">رطب جداً</span>
          <svg viewBox="0 0 12 8" className="w-[11px] h-[7px] ml-[26px]"><path d="M1 7l5-5 5 5" fill="none" stroke="#222" /></svg>
          <svg viewBox="0 0 12 20" className="w-[11px] h-[18px] ml-[13px]"><path d="M2 3c2-2 6-2 8 0M2 17c2 2 6 2 8 0" fill="none" stroke="#222" /><rect x="2" y="6" width="8" height="8" fill="none" stroke="#222" /></svg>
          <svg viewBox="0 0 16 12" className="w-[15px] h-[11px] ml-[11px]"><rect x=".5" y=".5" width="14" height="11" fill="none" stroke="#222" /><rect x="2" y="2" width="5" height="8" fill="#222" /></svg>
          <svg viewBox="0 0 16 16" className="w-[15px] h-[15px] ml-[10px]"><path d="M1 8c3-4 7-6 12-7M3 11c2-3 5-5 9-5M6 13c1-2 3-3 6-3" fill="none" stroke="#333" /><circle cx="13" cy="13" r="2" fill="#333" /></svg>
          <svg viewBox="0 0 18 16" className="w-[17px] h-[15px] ml-[7px]"><path d="M1 5h3l4-4v14l-4-4H1zM11 5c1.5 2 1.5 4 0 6M14 3c2.5 3 2.5 7 0 10" fill="none" stroke="#222" /></svg>
          <span className="ml-[10px] text-[11.5px]">ENG</span>
          <div className="ml-[12px] w-[54px] flex flex-col items-center text-[11.5px] leading-[15px]">
            <span dir="rtl" className="whitespace-nowrap">ص 02:59</span>
            <span dir="rtl" className="whitespace-nowrap">٢٠٢٥/٠٩/٠٦</span>
          </div>
          <svg viewBox="0 0 16 18" className="w-[16px] h-[19px] ml-[16px] mr-[25px]"><path d="M1 1h14v13H9l-3 4v-4H1z" fill="#111" /><path d="M4 5h8M4 8h8" stroke="#fff" /></svg>
        </div>
      </div>

      {/* overlays: thumbnail popup + watermark */}
      <div className="absolute left-[695px] top-[712px] w-[215px] h-[148px] bg-white shadow-[0_0_8px_rgba(0,0,0,.35)] flex flex-col items-center">
        <div className="w-full h-[33px] flex items-center pl-[9px] gap-[8px] text-[12px] text-[#222]">
          <ExcelIc /><span>اكسل - Excel</span>
        </div>
        <Mini />
      </div>
      <div dir="rtl" className="absolute left-[702px] top-[799px] w-[200px] h-[68px] text-center text-[64px] font-bold leading-[68px] text-[#b0b0b0]/45 pointer-events-none whitespace-nowrap">نفذلي</div>
      <div className="absolute left-[750px] top-[869px] text-[26px] font-semibold leading-[28px] text-[#9aa9ab]/30 pointer-events-none whitespace-nowrap">nafezly.com</div>
      <div className="absolute left-[680px] top-0 w-[48px] h-px bg-[#c2376a]" />
    </div>
  );
}
